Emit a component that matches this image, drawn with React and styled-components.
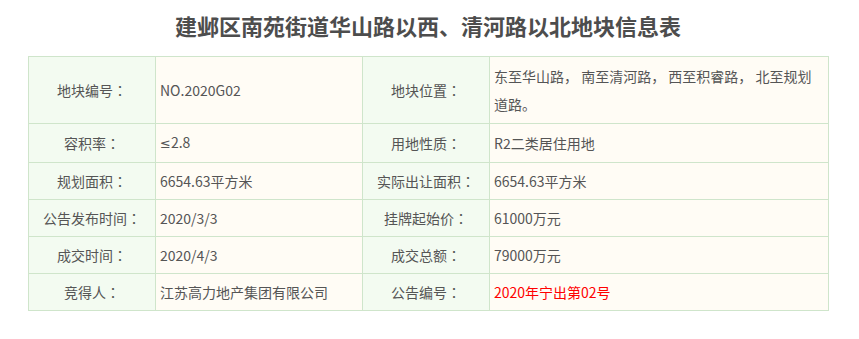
import React from 'react';
import styled, { createGlobalStyle } from 'styled-components';

const GlobalStyle = createGlobalStyle`
  body {
    margin: 0;
    background: #fff;
    font-family: "Microsoft YaHei", "Noto Sans CJK SC", sans-serif;
  }
`;

const Wrapper = styled.div`
  width: 800px;
  margin-left: 28px;
`;

const Title = styled.h2`
  margin: 0;
  height: 56px;
  line-height: 50px;
  text-align: center;
  font-size: 22px;
  font-weight: bold;
  color: #4d4d4d;
`;

const Table = styled.table`
  width: 800px;
  border-collapse: collapse;
  table-layout: fixed;
  font-size: 14px;
  color: #555;
`;

const Col = styled.col`
  width: ${(p) => p.$w}px;
`;

const Cell = styled.td`
  border: 1px solid #cfe5cb;
  line-height: 28px;
  padding: ${(p) => (p.$tall ? '5px 4px' : '4px 4px')};
  vertical-align: middle;
`;

const LabelCell = styled(Cell)`
  background: #f3fbf1;
  text-align: center;
`;

const ValueCell = styled(Cell)`
  background: #fffcf5;
  text-align: left;
  color: ${(p) => (p.$red ? '#ff0000' : '#555')};
`;

// centred full-width colon, as in the original font
const Colon = styled.span`
  font-family: "Noto Sans CJK JP", sans-serif;
`;

const Sym = styled.span`
  font-family: "DejaVu Sans", sans-serif;
  font-size: 13px;
`;

const Label = ({ text }) => (
  <>
    {text}
    <Colon>：</Colon>
  </>
);

const rows = [
  ['地块编号', 'NO.2020G02', '地块位置', '东至华山路， 南至清河路， 西至积睿路， 北至规划道路。'],
  ['容积率', <><Sym>≤</Sym>2.8</>, '用地性质', 'R2二类居住用地'],
  ['规划面积', '6654.63平方米', '实际出让面积', '6654.63平方米'],
  ['公告发布时间', '2020/3/3', '挂牌起始价', '61000万元'],
  ['成交时间', '2020/4/3', '成交总额', '79000万元'],
  ['竞得人', '江苏高力地产集团有限公司', '公告编号', '2020年宁出第02号'],
];

export default function App() {
  return (
    <Wrapper>
      <GlobalStyle />
      <Title>建邺区南苑街道华山路以西、清河路以北地块信息表</Title>
      <Table>
        <colgroup>
          <Col $w={127} />
          <Col $w={207} />
          <Col $w={127} />
          <Col $w={339} />
        </colgroup>
        <tbody>
          {rows.map((r, i) => (
            <tr key={i}>
              <LabelCell $tall={i === 0}><Label text={r[0]} /></LabelCell>
              <ValueCell $tall={i === 0}>{r[1]}</ValueCell>
              <LabelCell $tall={i === 0}><Label text={r[2]} /></LabelCell>
              <ValueCell $tall={i === 0} $red={i === rows.length - 1}>{r[3]}</ValueCell>
            </tr>
          ))}
        </tbody>
      </Table>
    </Wrapper>
  );
}
